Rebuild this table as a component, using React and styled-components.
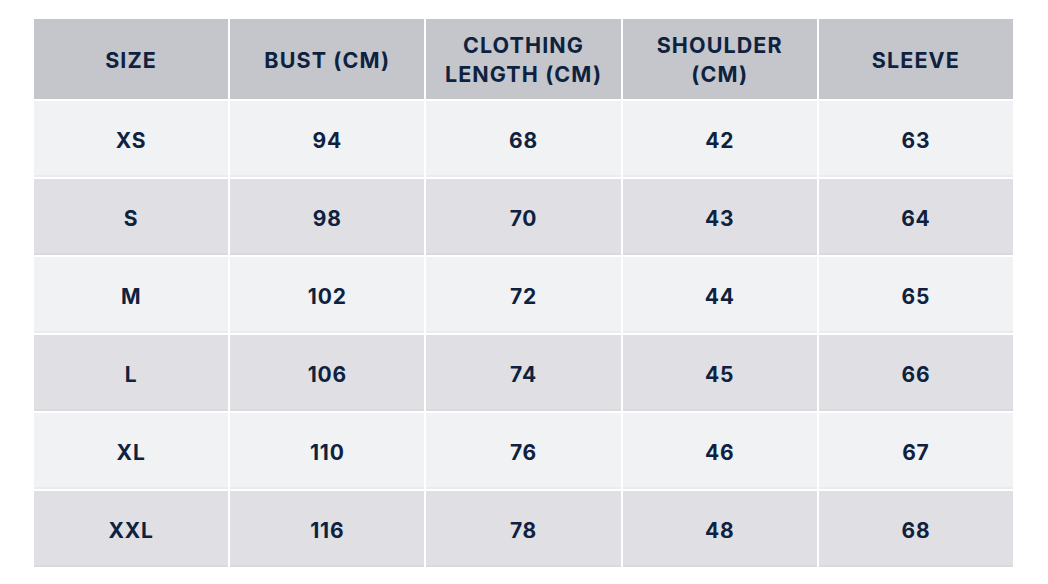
import styled, { createGlobalStyle } from "styled-components";

const GlobalStyle = createGlobalStyle`
  html, body {
    margin: 0;
    padding: 0;
    background: #ffffff;
  }
  body {
    font-family: Inter, "Liberation Sans", sans-serif;
  }
`;

const Page = styled.div`
  width: 1048px;
  height: 584px;
  padding: 19px 0 0 34px;
  box-sizing: border-box;
`;

const Table = styled.div`
  width: 979px;
  display: grid;
  grid-template-columns: repeat(5, 1fr);
  grid-template-rows: 80px repeat(6, 76px);
  column-gap: 2px;
  row-gap: 2px;
`;

const HeadCell = styled.div`
  background: #c4c6cb;
  color: #0e2240;
  display: flex;
  align-items: center;
  justify-content: center;
  text-align: center;
  font-weight: 700;
  font-size: 21.5px;
  line-height: 29px;
  letter-spacing: 1.1px;
  padding-top: 2px;
`;

const Cell = styled.div`
  background: ${p => (p.$alt ? "#e0e0e4" : "#f1f2f4")};
  box-shadow: inset 0 -2px 0 ${p => (p.$alt ? "#d9d9de" : "#eaebee")};
  color: #0e2240;
  display: flex;
  align-items: center;
  justify-content: center;
  font-weight: 700;
  font-size: 21px;
  letter-spacing: 0.8px;
  padding-top: 2px;
`;

const headers = ["SIZE", "BUST (CM)", "CLOTHING\nLENGTH (CM)", "SHOULDER\n(CM)", "SLEEVE"];

const rows = [
  ["XS", 94, 68, 42, 63],
  ["S", 98, 70, 43, 64],
  ["M", 102, 72, 44, 65],
  ["L", 106, 74, 45, 66],
  ["XL", 110, 76, 46, 67],
  ["XXL", 116, 78, 48, 68],
];

export default function App() {
  return (
    <Page>
      <GlobalStyle />
      <Table>
        {headers.map(h => (
          <HeadCell key={h}>
            <span>
              {h.split("\n").map((line, i) => (
                <div key={i}>{line}</div>
              ))}
            </span>
          </HeadCell>
        ))}
        {rows.map((row, r) =>
          row.map((v, c) => (
            <Cell key={r + "-" + c} $alt={r % 2 === 1}>
              {v}
            </Cell>
          ))
        )}
      </Table>
    </Page>
  );
}
